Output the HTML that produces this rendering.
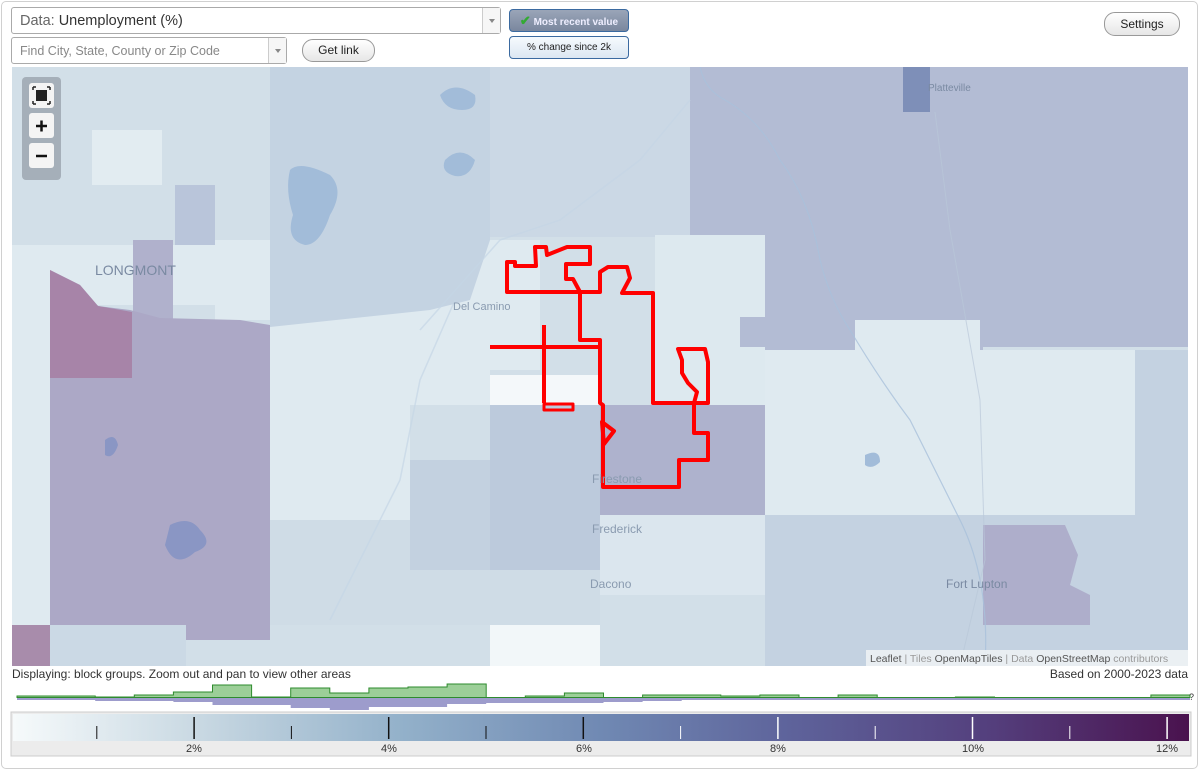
<!DOCTYPE html>
<html><head><meta charset="utf-8">
<style>
*{box-sizing:border-box}
body{margin:0;width:1200px;height:771px;background:#fff;font-family:"Liberation Sans",Arial,sans-serif;position:relative;overflow:hidden}
.frame{position:absolute;left:1px;top:1px;width:1197px;height:768px;border:1px solid #d0d0d0;border-radius:5px}
.sel{position:absolute;border:1px solid #aaa;border-radius:3px;background:#fff;font-size:14px;color:#333}
.sel .arr{position:absolute;right:0;top:0;bottom:0;width:18px;border-left:1px solid #ccc;background:#f6f6f6}
.sel .arr:after{content:"";position:absolute;left:6px;top:50%;margin-top:-2px;border:3px solid transparent;border-top:4px solid #888}
.btn{position:absolute;border:1px solid #999;border-radius:11px;background:linear-gradient(#fff,#e6e6e6);font-size:12px;text-align:center;color:#222}
.tb{position:absolute;border:1px solid #3b6aa0;border-radius:4px;font-size:10px;text-align:center}
</style></head><body>
<div class="frame"></div>
<div class="sel" style="left:11px;top:7px;width:490px;height:27px;padding:5px 8px;font-size:14.5px"><span style="color:#666">Data:</span> Unemployment (%)<div class="arr"></div></div>
<div class="sel" style="left:11px;top:37px;width:276px;height:27px;padding:6px 8px;font-size:12.5px;color:#888">Find City, State, County or Zip Code<div class="arr"></div></div>
<div class="btn" style="left:302px;top:39px;width:73px;height:23px;line-height:21px">Get link</div>
<div class="tb" style="left:509px;top:9px;width:120px;height:23px;line-height:21px;background:linear-gradient(#9aa5b8,#7a879e);color:#eef;font-weight:bold"><span style="color:#3a3;font-size:13px">✔</span> Most recent value</div>
<div class="tb" style="left:509px;top:36px;width:120px;height:23px;line-height:21px;background:linear-gradient(#f6fafd,#dce7f2);color:#222">% change since 2k</div>
<div class="btn" style="left:1104px;top:12px;width:76px;height:24px;line-height:22px">Settings</div>

<svg style="position:absolute;left:12px;top:67px" width="1176" height="599" viewBox="12 67 1176 599">
<rect x="12" y="67" width="1176" height="599" fill="#d2dfe8"/>
<rect x="270" y="67" width="220" height="260" fill="#c4d3e2"/>
<rect x="490" y="67" width="210" height="170" fill="#cbd8e5"/>
<rect x="690" y="67" width="498" height="280" fill="#b3bcd4"/>
<rect x="655" y="235" width="110" height="170" fill="#dde9ef"/>
<rect x="765" y="290" width="218" height="60" fill="#b3bcd4"/>
<rect x="740" y="317" width="120" height="30" fill="#b3bcd4"/>
<rect x="765" y="350" width="370" height="165" fill="#dfeaf0"/>
<rect x="855" y="320" width="125" height="30" fill="#dfeaf0"/>
<rect x="1135" y="350" width="53" height="300" fill="#c4d2e1"/>
<rect x="903" y="67" width="27" height="45" fill="#7e8fb8"/>
<rect x="92" y="130" width="70" height="55" fill="#e2ecf1"/>
<rect x="175" y="185" width="40" height="60" fill="#b9c5da"/>
<rect x="12" y="245" width="38" height="420" fill="#dfeaf0"/>
<rect x="50" y="245" width="190" height="60" fill="#dfeaf0"/>
<rect x="133" y="240" width="40" height="80" fill="#b0b1cc"/>
<rect x="215" y="240" width="55" height="80" fill="#dfeaf0"/>
<path d="M50 270 L80 285 L98 306 L130 310 L160 318 L240 320 L270 325 L270 640 L50 640 Z" fill="#aca8c6"/>
<path d="M50 270 L80 285 L98 306 L132 312 L132 378 L50 378 Z" fill="#a784a8"/>
<path d="M270 327 L430 310 L470 300 L490 240 L540 240 L540 370 L490 370 L490 405 L410 405 L410 520 L270 520 Z" fill="#dfeaf0"/>
<rect x="270" y="520" width="330" height="105" fill="#cfdce6"/>
<rect x="410" y="460" width="85" height="110" fill="#c3d1e0"/>
<rect x="490" y="375" width="110" height="30" fill="#f4f8fa"/>
<rect x="490" y="405" width="110" height="165" fill="#bccadc"/>
<rect x="600" y="405" width="165" height="110" fill="#aeb2cd"/>
<rect x="600" y="515" width="165" height="80" fill="#dbe6ee"/>
<rect x="490" y="625" width="110" height="41" fill="#f2f7f9"/>
<rect x="765" y="515" width="370" height="151" fill="#c4d2e1"/>
<rect x="940" y="515" width="135" height="150" fill="#c4d2e1"/>
<path d="M983 525 L1065 525 L1078 555 L1070 585 L1090 595 L1090 625 L983 625 Z" fill="#aeaecb"/>
<rect x="12" y="625" width="38" height="41" fill="#a88cab"/>
<rect x="50" y="625" width="136" height="41" fill="#cbd9e5"/>
<path d="M290 170 Q300 160 330 175 Q345 190 330 215 Q320 245 305 245 Q285 240 293 215 Q285 190 290 170Z" fill="#a2bcd9"/>
<path d="M440 95 Q455 80 475 95 Q478 110 462 110 Q445 110 440 95Z" fill="#a2bcd9"/>
<path d="M445 160 Q460 145 475 160 Q470 178 455 176 Q440 172 445 160Z" fill="#a2bcd9"/>
<path d="M170 525 Q190 515 200 530 Q215 545 195 552 Q175 570 165 545 Z" fill="#8a96c4"/>
<path d="M105 440 Q115 432 118 445 Q113 460 105 455Z" fill="#8a96c4"/>
<path d="M865 455 Q880 448 880 462 Q872 470 865 465Z" fill="#a2bcd9"/>
<path d="M700 67 Q705 90 725 100 Q760 120 780 160 Q810 200 820 260 Q830 300 850 330 Q880 380 910 420 Q935 470 960 520 Q990 580 985 666" fill="none" stroke="#a9c0db" stroke-width="1.2" opacity="0.8"/>
<path d="M935 112 L950 230 L980 400 L985 560 L960 666" fill="none" stroke="#b9c7d8" stroke-width="1" opacity="0.7"/>
<path d="M420 330 L500 240 L560 220 L640 160 L690 100" fill="none" stroke="#c4d6e6" stroke-width="1.5" opacity="0.7"/>
<path d="M330 620 L400 480 L420 380 L455 300" fill="none" stroke="#c4d6e6" stroke-width="1.5" opacity="0.7"/>
<g fill="none" stroke="#f00" stroke-width="4" stroke-linejoin="round">
<path d="M507 262 L515 262 L515 266 L536 266 L535 247 L546 247 L547 255 L567 247 L590 247 L590 264 L566 264 L566 279 L573 279 L580 292 L507 292 Z"/>
<path d="M580 292 L580 340 L600 340 L600 403 L603 405 L603 487 L679 487 L679 460 L708 460 L708 433 L694 433 L694 403 L653 403 L653 293 L622 293 L630 278 L627 267 L608 267 L600 272 L600 292 Z"/>
<path d="M678 349 L705 349 L708 362 L708 403 L694 403 L697 392 L688 383 L682 373 L682 360 Z"/>
<path d="M490 347 L600 347 M544 325 L544 403"/>
<rect x="544" y="404" width="29" height="6" stroke-width="3"/>
<path d="M602 422 L614 431 L604 444 Z"/>
</g>
<g font-size="12" fill="#8a9bb0">
<text x="95" y="275" font-size="14" fill="#7a8aa2">LONGMONT</text>
<text x="453" y="310" font-size="11">Del Camino</text>
<text x="592" y="483" font-size="12">Firestone</text>
<text x="592" y="533" font-size="12">Frederick</text>
<text x="590" y="588" font-size="12">Dacono</text>
<text x="946" y="588" font-size="12" fill="#7a8aa2">Fort Lupton</text>
<text x="928" y="91" font-size="10" fill="#7a8aa2">Platteville</text>
</g>
<rect x="866" y="650" width="322" height="16" fill="#f0f3f5" opacity="0.85"/>
<text x="870" y="662" font-size="10.5" fill="#999"><tspan fill="#555">Leaflet</tspan> | Tiles <tspan fill="#555">OpenMapTiles</tspan> | Data <tspan fill="#555">OpenStreetMap</tspan> contributors</text>
<rect x="22" y="77" width="39" height="103" rx="4" fill="#9aa3ad" opacity="0.8"/>
<rect x="29" y="83" width="25" height="25" rx="3" fill="#f4f4f4"/>
<rect x="29" y="113" width="25" height="25" rx="3" fill="#f4f4f4"/>
<rect x="29" y="143" width="25" height="25" rx="3" fill="#f4f4f4"/>
<rect x="36" y="90" width="11" height="11" fill="#222"/>
<path d="M33 87h3M33 87v3M50 87h-3M50 87v3M33 104h3M33 104v-3M50 104h-3M50 104v-3" stroke="#222" stroke-width="1.5"/>
<path d="M36 126h11M41.5 120.5v11" stroke="#111" stroke-width="2.5"/>
<path d="M36 156h11" stroke="#111" stroke-width="2.5"/>
</svg>

<div style="position:absolute;left:12px;top:667px;font-size:12px;color:#333">Displaying: block groups. Zoom out and pan to view other areas</div>
<div style="position:absolute;right:12px;top:667px;font-size:12px;color:#333">Based on 2000-2023 data</div>

<svg style="position:absolute;left:0;top:680px" width="1200" height="90" viewBox="0 680 1200 90">
<path id="pp" fill="#9d9ccc"/>
<path id="gp" fill="#9ccf98" stroke="#2e8b2e" stroke-width="1"/>
<text x="1189" y="700" font-size="9" fill="#333">?</text>
<defs><linearGradient id="g" x1="0" x2="1">
<stop offset="0" stop-color="#f6fafb"/><stop offset="0.16" stop-color="#c8d8e2"/><stop offset="0.33" stop-color="#93b1ca"/><stop offset="0.5" stop-color="#7089b3"/><stop offset="0.66" stop-color="#5e639b"/><stop offset="0.83" stop-color="#543f7d"/><stop offset="1" stop-color="#4a124e"/></linearGradient></defs>
<rect x="11" y="712" width="1180" height="44" fill="#ececec" stroke="#ccc"/>
<rect x="13" y="714" width="1176" height="27" fill="url(#g)"/>
<g id="t"></g>
<g font-size="11" fill="#333" text-anchor="middle">
<text x="194" y="752">2%</text><text x="389" y="752">4%</text><text x="584" y="752">6%</text><text x="778" y="752">8%</text><text x="973" y="752">10%</text><text x="1167" y="752">12%</text></g>
</svg>
<script>
var G=[696,696,697,695,692,685,697,688,693,688,687,684,697.5,696,693,697.5,695,695,696,695,697.5,695,697.5,697.5,697,697.5,697.5,697.5,697.5,695];
var P=[700,700,701,701,702,705,705,708,710,707,707,704,703,703,703,702,701,700,700,700,700,700,700,700,700,700,700,700,700,700];
var w=39.1,x0=17,b=697.5,g="M"+x0+" "+b,p="M"+x0+" "+b;
for(var i=0;i<30;i++){var a=x0+i*w,c=a+w;g+=" L"+a+" "+G[i]+" L"+c+" "+G[i];p+=" L"+a+" "+P[i]+" L"+c+" "+P[i];}
var e=x0+30*w;g+=" L"+e+" "+b+" Z";p+=" L"+e+" "+b+" Z";
document.getElementById("gp").setAttribute("d",g);document.getElementById("pp").setAttribute("d",p);
var t="";for(var k=1;k<=12;k++){var x=-0.5+k*97.3,maj=k%2==0;t+='<line x1="'+x+'" x2="'+x+'" y1="'+(maj?717:726)+'" y2="739" stroke="'+(k<7?'#111':'#fff')+'" stroke-width="'+(maj?1.5:1)+'"/>';}
document.getElementById("t").innerHTML=t;
</script>
</body></html>
